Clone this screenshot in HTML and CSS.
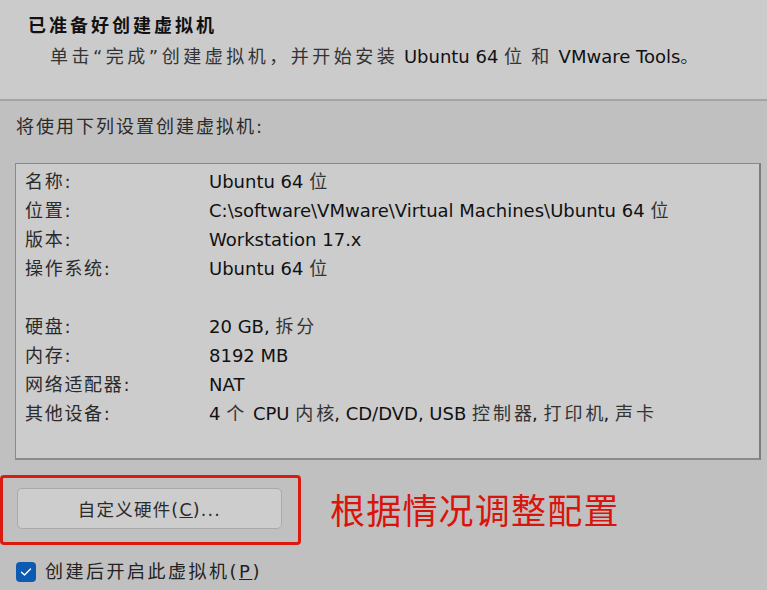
FILE: index.html
```html
<!DOCTYPE html>
<html lang="zh-CN">
<head>
<meta charset="utf-8">
<title>新建虚拟机向导</title>
<link rel="stylesheet" href="styles.css">
</head>
<body>
<header class="header">
  <h1 class="title">已准备好创建虚拟机</h1>
  <p class="subtitle"><span class="cjk">单击“完成”创建虚拟机，并开始安装</span> Ubuntu 64 <span class="cjk">位</span> <span class="cjk">和</span> VMware Tools<span class="cjk">。</span></p>
</header>
<main class="main">
  <p class="intro">将使用下列设置创建虚拟机:</p>
  <div class="summary">
    <div class="row"><span class="label">名称:</span><span class="value">Ubuntu 64 <span class="c">位</span></span></div>
    <div class="row"><span class="label">位置:</span><span class="value">C:\software\VMware\Virtual Machines\Ubuntu 64 <span class="c">位</span></span></div>
    <div class="row"><span class="label">版本:</span><span class="value">Workstation 17.x</span></div>
    <div class="row"><span class="label">操作系统:</span><span class="value">Ubuntu 64 <span class="c">位</span></span></div>
    <div class="row blank"></div>
    <div class="row"><span class="label">硬盘:</span><span class="value">20 GB, <span class="c">拆分</span></span></div>
    <div class="row"><span class="label">内存:</span><span class="value">8192 MB</span></div>
    <div class="row"><span class="label">网络适配器:</span><span class="value">NAT</span></div>
    <div class="row"><span class="label">其他设备:</span><span class="value">4 <span class="c">个</span> CPU <span class="c">内<span class="cl">核</span></span>, CD/DVD, USB <span class="c">控制<span class="cl">器</span></span>, <span class="c">打印<span class="cl">机</span></span>, <span class="c">声卡</span></span></div>
  </div>
  <div class="custom-row">
    <div class="highlight">
      <button class="btn" type="button">自定义硬件(<u>C</u>)...</button>
    </div>
    <span class="note">根据情况调整配置</span>
  </div>
  <label class="check">
    <span class="box"><svg width="12" height="10" viewBox="0 0 12 10"><path d="M1.5 5.2 L4.5 8 L10.5 2" fill="none" stroke="#fff" stroke-width="1.4" stroke-linecap="round" stroke-linejoin="round"/></svg></span>
    <span class="check-text">创建后开启此虚拟机(<u>P</u>)</span>
  </label>
</main>
</body>
</html>
```

FILE: styles.css
```css
* { box-sizing: border-box; }
html, body {
  margin: 0;
  padding: 0;
}
body {
  width: 767px;
  height: 590px;
  overflow: hidden;
  background: #c0c0c0;
  font-family: "DejaVu Sans", "Noto Sans CJK SC", sans-serif;
  font-size: 18px;
  color: #1a1a1a;
}
.header {
  height: 101px;
  background: #cbcbcb;
  border-bottom: 2px solid #a4a4a4;
  padding: 12px 0 0 28px;
}
.title {
  margin: 0;
  font-family: "Noto Sans CJK SC", sans-serif;
  font-size: 18px;
  font-weight: 700;
  line-height: 24px;
  letter-spacing: 3px;
  color: #111;
}
.subtitle {
  margin: 9px 0 0 22px;
  line-height: 24px;
  color: #111;
}
.cjk {
  letter-spacing: 3.5px;
  color: #333;
}
.main {
  padding: 14px 7px 0 15px;
}
.intro {
  margin: 0 0 0 1px;
  line-height: 24px;
  letter-spacing: 2px;
  color: #2a2a2a;
}
.summary {
  margin-top: 24px;
  width: 746px;
  height: 297px;
  background: #cccccc;
  border: 1px solid #8a8a8a;
  border-right: 2px solid #7c7c7c;
  border-bottom: 2px solid #8a8a8a;
  padding: 3px 0 0 9px;
}
.row {
  display: grid;
  grid-template-columns: 184px auto;
  height: 29px;
  line-height: 29px;
}
.label {
  letter-spacing: 1.7px;
  color: #2a2a2a;
}
.value { color: #111; }
.c {
  letter-spacing: 3px;
  color: #333;
}
.cl { letter-spacing: 0; }
.custom-row {
  display: flex;
  align-items: center;
  margin-top: 15px;
  margin-left: -15px;
}
.highlight {
  width: 301px;
  height: 70px;
  border: 3px solid #dc1a10;
  border-radius: 4px;
  padding: 10px 0 0 14px;
}
.btn {
  display: block;
  width: 265px;
  height: 41px;
  background: #cdcdcd;
  border: 1px solid #a9a9a9;
  border-radius: 5px;
  font-family: "DejaVu Sans", "Noto Sans CJK SC", sans-serif;
  font-size: 17.5px;
  letter-spacing: 1.2px;
  color: #2a2a2a;
  padding: 0;
}
.note {
  margin-left: 29px;
  margin-top: -3px;
  font-family: "Noto Sans CJK SC", sans-serif;
  font-size: 35px;
  letter-spacing: 1.2px;
  color: #d8140c;
  line-height: 40px;
}
.check {
  display: flex;
  align-items: center;
  margin-top: 15px;
  margin-left: 1px;
}
.box {
  width: 20px;
  height: 20px;
  border-radius: 4px;
  background: #0d5bb0;
  display: flex;
  align-items: center;
  justify-content: center;
}
.check-text {
  margin-left: 9px;
  letter-spacing: 2.5px;
  color: #222;
  line-height: 24px;
}
```
